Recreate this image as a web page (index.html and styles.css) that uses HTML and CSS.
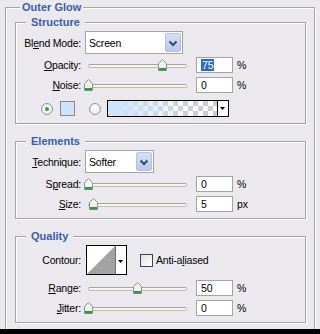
FILE: index.html
```html
<!DOCTYPE html>
<html lang="en">
<head>
  <meta charset="UTF-8">
  <title>Outer Glow</title>
  <link rel="stylesheet" href="styles.css">
</head>
<body>

<fieldset class="group outer">
  <legend>Outer Glow</legend>

  <!-- Structure -->
  <fieldset class="group">
    <legend>Structure</legend>
    <div class="row tall first">
      <span class="lbl">Bl<u>e</u>nd Mode:</span>
      <div class="combo blend">
        <span class="value">Screen</span>
        <span class="drop"><svg width="14" height="19" viewBox="0 0 14 19"><path d="M3.5 7.5 L7 11 L10.5 7.5" fill="none" stroke="#34466e" stroke-width="2"/></svg></span>
      </div>
    </div>
    <div class="row gap3">
      <span class="lbl"><u>O</u>pacity:</span>
      <div class="slider">
        <div class="track"></div>
        <svg class="thumb" style="left: 74px" width="9" height="12" viewBox="0 0 9 12"><path d="M0.5 4.5 L4.5 0.5 L8.5 4.5 L8.5 11.5 L0.5 11.5 Z" fill="#f2f2f0" stroke="#8c9290"/><rect x="1" y="9" width="7" height="2.5" fill="#2e9c3c"/></svg>
      </div>
      <span class="field"><span class="hl">75</span></span>
      <span class="unit">%</span>
    </div>
    <div class="row">
      <span class="lbl"><u>N</u>oise:</span>
      <div class="slider">
        <div class="track"></div>
        <svg class="thumb" style="left: 0px" width="9" height="12" viewBox="0 0 9 12"><path d="M0.5 4.5 L4.5 0.5 L8.5 4.5 L8.5 11.5 L0.5 11.5 Z" fill="#f2f2f0" stroke="#8c9290"/><rect x="1" y="9" width="7" height="2.5" fill="#2e9c3c"/></svg>
      </div>
      <span class="field">0</span>
      <span class="unit">%</span>
    </div>
    <div class="row colors">
      <span class="radio on"></span>
      <span class="swatch"></span>
      <span class="radio"></span>
      <div class="gradient">
        <span class="fill"></span>
        <span class="arrow"><svg width="9" height="15" viewBox="0 0 9 15"><path d="M2 6 L7 6 L4.5 9 Z" fill="#000"/></svg></span>
      </div>
    </div>
  </fieldset>

  <!-- Elements -->
  <fieldset class="group">
    <legend>Elements</legend>
    <div class="row tall first">
      <span class="lbl"><u>T</u>echnique:</span>
      <div class="combo technique">
        <span class="value">Softer</span>
        <span class="drop"><svg width="14" height="19" viewBox="0 0 14 19"><path d="M3.5 7.5 L7 11 L10.5 7.5" fill="none" stroke="#34466e" stroke-width="2"/></svg></span>
      </div>
    </div>
    <div class="row gap3">
      <span class="lbl">S<u>p</u>read:</span>
      <div class="slider">
        <div class="track"></div>
        <svg class="thumb" style="left: 0px" width="9" height="12" viewBox="0 0 9 12"><path d="M0.5 4.5 L4.5 0.5 L8.5 4.5 L8.5 11.5 L0.5 11.5 Z" fill="#f2f2f0" stroke="#8c9290"/><rect x="1" y="9" width="7" height="2.5" fill="#2e9c3c"/></svg>
      </div>
      <span class="field">0</span>
      <span class="unit">%</span>
    </div>
    <div class="row">
      <span class="lbl"><u>S</u>ize:</span>
      <div class="slider">
        <div class="track"></div>
        <svg class="thumb" style="left: 5px" width="9" height="12" viewBox="0 0 9 12"><path d="M0.5 4.5 L4.5 0.5 L8.5 4.5 L8.5 11.5 L0.5 11.5 Z" fill="#f2f2f0" stroke="#8c9290"/><rect x="1" y="9" width="7" height="2.5" fill="#2e9c3c"/></svg>
      </div>
      <span class="field">5</span>
      <span class="unit">px</span>
    </div>
  </fieldset>

  <!-- Quality -->
  <fieldset class="group">
    <legend>Quality</legend>
    <div class="row contour-row first">
      <span class="lbl">Contour:</span>
      <span class="contour"><svg width="39" height="28" viewBox="0 0 39 28"><path d="M1 27 L28 0 L28 28 L1 28 Z" fill="#a3a3a5"/><line x1="28.5" y1="0" x2="28.5" y2="28" stroke="#6e6e70"/><path d="M31 14 L36 14 L33.5 17 Z" fill="#000"/></svg></span>
      <span class="check"></span>
      <span class="check-lbl">Anti-a<u>l</u>iased</span>
    </div>
    <div class="row gap5">
      <span class="lbl"><u>R</u>ange:</span>
      <div class="slider">
        <div class="track"></div>
        <svg class="thumb" style="left: 49px" width="9" height="12" viewBox="0 0 9 12"><path d="M0.5 4.5 L4.5 0.5 L8.5 4.5 L8.5 11.5 L0.5 11.5 Z" fill="#f2f2f0" stroke="#8c9290"/><rect x="1" y="9" width="7" height="2.5" fill="#2e9c3c"/></svg>
      </div>
      <span class="field">50</span>
      <span class="unit">%</span>
    </div>
    <div class="row">
      <span class="lbl"><u>J</u>itter:</span>
      <div class="slider">
        <div class="track"></div>
        <svg class="thumb" style="left: 0px" width="9" height="12" viewBox="0 0 9 12"><path d="M0.5 4.5 L4.5 0.5 L8.5 4.5 L8.5 11.5 L0.5 11.5 Z" fill="#f2f2f0" stroke="#8c9290"/><rect x="1" y="9" width="7" height="2.5" fill="#2e9c3c"/></svg>
      </div>
      <span class="field">0</span>
      <span class="unit">%</span>
    </div>
  </fieldset>
</fieldset>

<div class="bottom-bar"></div>

</body>
</html>
```

FILE: styles.css
```css
body {
  margin: 0;
  height: 334px;
  overflow: hidden;
  background: #ebe9ed;
  font-family: "Liberation Sans", Arial, sans-serif;
  font-size: 10.5px;
  letter-spacing: -0.2px;
  color: #000;
}

u {
  text-underline-offset: 1px;
}

/* group boxes */
.group {
  margin: 10px 8px 0 9px;
  padding: 2px 0 6px;
  border: 1px solid #a4a2a8;
  box-shadow: inset 1px 1px 0 #fff, 1px 1px 0 #fff;
  min-width: 0;
}

.group legend {
  margin-left: 10px;
  padding: 0 5px;
  line-height: 14px;
  font-size: 11px;
  font-weight: bold;
  letter-spacing: 0;
  color: #3a5eae;
  background: #ebe9ed;
}

.outer {
  margin: 0 5px;
  padding: 1px 0 6px;
  border-bottom: none;
}

.outer > legend {
  margin-left: 14px;
  padding: 0 2px;
}

.outer > legend + .group {
  margin-top: 0;
}

.bottom-bar {
  height: 10px;
  background: #000;
}

/* rows */
.row {
  display: flex;
  align-items: center;
  height: 16px;
  margin-top: 4px;
}

.row.first {
  margin-top: 0;
}

.row.gap3 {
  margin-top: 3px;
}

.row.gap5 {
  margin-top: 5px;
}

.row.tall {
  height: 23px;
}

.lbl {
  width: 65px;
  margin-right: 4px;
  text-align: right;
  white-space: nowrap;
}

/* combo boxes */
.combo {
  display: flex;
  height: 23px;
  box-sizing: border-box;
  border: 1px solid #a5a3a9;
  background: #fff;
  padding: 1px;
}

.combo.blend {
  width: 98px;
}

.combo.technique {
  width: 69px;
}

.combo .value {
  flex: 1;
  padding-left: 2px;
  line-height: 20px;
}

.combo .drop {
  width: 16px;
  box-sizing: border-box;
  border: 1px solid #b2c1e4;
  border-radius: 2px;
  background: linear-gradient(#d6e0f6, #b9c8ec);
}

.combo .drop svg {
  display: block;
}

/* sliders */
.slider {
  position: relative;
  width: 107px;
  height: 16px;
  margin-left: -1px;
}

.track {
  height: 4px;
  margin: 7px 4px 0;
  box-sizing: border-box;
  border: 1px solid #bdbcb3;
  border-top-color: #a6a59e;
  border-radius: 2px;
  background: #f6f5ea;
}

.thumb {
  position: absolute;
  top: 2px;
}

/* number fields */
.field {
  width: 37px;
  height: 16px;
  box-sizing: border-box;
  margin-left: 5px;
  padding-left: 4px;
  border: 1px solid #a3a2a8;
  background: #fff;
  line-height: 14px;
}

.field .hl {
  padding: 0 1px;
  background: #316ac5;
  color: #fff;
}

.unit {
  margin-left: 4px;
}

/* colour choice */
.row.colors {
  height: 17px;
  margin-top: 7px;
  padding-left: 25px;
}

.radio {
  width: 12px;
  height: 12px;
  box-sizing: border-box;
  border: 1px solid #8996a8;
  border-radius: 50%;
  background: radial-gradient(circle at 40% 40%, #fff, #e4e4e2);
  display: flex;
  align-items: center;
  justify-content: center;
}

.radio.on::after {
  content: "";
  width: 4px;
  height: 4px;
  border-radius: 50%;
  background: #2fa83a;
}

.swatch {
  width: 15px;
  height: 15px;
  box-sizing: border-box;
  margin: 0 14px 0 7px;
  border: 1px solid #8a8a8e;
  background: #cce3fb;
}

.gradient {
  display: flex;
  width: 122px;
  height: 17px;
  box-sizing: border-box;
  margin-left: 6px;
  border: 1px solid #000;
  background: #fff;
}

.gradient .fill {
  flex: 1;
  background:
    linear-gradient(to right, #cde4fb 5%, rgba(205, 228, 251, 0) 85%),
    repeating-conic-gradient(#cdcdcd 0 25%, #fff 0 50%) 0 0 / 10px 10px;
}

.gradient .arrow {
  width: 10px;
  border-left: 1px solid #000;
}

.gradient .arrow svg {
  display: block;
}

/* quality */
.row.contour-row {
  height: 30px;
}

.contour {
  width: 41px;
  height: 30px;
  box-sizing: border-box;
  margin-left: 1px;
  border: 1px solid #000;
  background: #fff;
}

.contour svg {
  display: block;
}

.check {
  width: 13px;
  height: 13px;
  box-sizing: border-box;
  margin-left: 13px;
  border: 1px solid #2b4868;
  background: linear-gradient(135deg, #e2e2dc, #fff);
}

.check-lbl {
  margin-left: 3px;
}
```
